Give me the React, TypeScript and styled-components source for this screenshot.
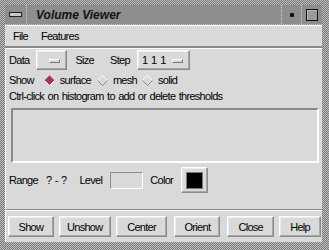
import React from "react";
import styled, { createGlobalStyle } from "styled-components";

const Global = createGlobalStyle`
  html, body { margin: 0; padding: 0; background: #d9d9d9; }
  body {
    font-family: "Liberation Sans", Arial, sans-serif;
    font-size: 11px;
    letter-spacing: -0.7px;
    word-spacing: 1px;
    color: #000;
  }
`;

const Frame = styled.div`
  width: 329px;
  height: 250px;
  box-sizing: border-box;
  padding: 5px 7px 8px 5px;
  background: repeating-conic-gradient(#7a7a7a 0 25%, #bdbdbd 0 50%) 0 0 / 2px 2px;
  display: flex;
  flex-direction: column;
`;

const TitleBar = styled.div`
  height: 19px;
  display: flex;
  align-items: stretch;
  background: #8e8e8e;
  border-bottom: 1px dotted #c8c8c8;
`;

const TitleSlot = styled.div<{ $w: number; $left?: boolean }>`
  width: ${(p) => p.$w}px;
  display: flex;
  align-items: center;
  justify-content: center;
  ${(p) => (p.$left ? "border-right: 1px dotted #cfcfcf;" : "border-left: 1px dotted #cfcfcf;")}
`;

const MenuGlyph = styled.div`
  width: 11px;
  height: 3px;
  background: #c8c8c8;
  border: 1px solid #222;
`;

const Dot = styled.div`
  width: 4px;
  height: 4px;
  background: #111;
  border-radius: 1px;
`;

const MaxBox = styled.div`
  width: 10px;
  height: 10px;
  border: 1px solid #111;
  background: #9a9a9a;
  box-shadow: inset 1px 1px 0 #bbb;
`;

const Title = styled.div`
  flex: 1;
  padding-left: 9px;
  display: flex;
  align-items: center;
  font-family: "Liberation Sans", Arial, sans-serif;
  font-weight: bold;
  font-style: italic;
  font-size: 12px;
  letter-spacing: 0;
  word-spacing: 0;
  color: #111;
`;

const MenuBar = styled.div`
  height: 23px;
  box-sizing: border-box;
  background: #d9d9d9;
  border-top: 1px solid #ffffff;
  border-bottom: 2px solid #8a8a8a;
  display: flex;
  align-items: center;
  padding-left: 8px;
  gap: 13px;
`;

const Content = styled.div`
  flex: 1;
  background: #d9d9d9;
  border-top: 1px solid #fff;
  border-left: 1px solid #fff;
  border-bottom: 1px solid #8a8a8a;
  padding: 1px 2px 0 2px;
  display: flex;
  flex-direction: column;
`;

const Row = styled.div<{ $h: number; $mt?: number }>`
  height: ${(p) => p.$h}px;
  margin-top: ${(p) => p.$mt ?? 0}px;
  display: flex;
  align-items: center;
  white-space: nowrap;
`;

const Label = styled.span<{ $ml?: number }>`
  margin-left: ${(p) => p.$ml ?? 0}px;
`;

const Raised = styled.div`
  border-top: 1px solid #ffffff;
  border-left: 1px solid #ffffff;
  border-right: 1px solid #8a8a8a;
  border-bottom: 1px solid #8a8a8a;
  box-shadow: inset -1px -1px 0 #a8a8a8, inset 1px 1px 0 #ececec;
`;

const OptionMenu = styled(Raised)<{ $w: number; $ml: number }>`
  width: ${(p) => p.$w}px;
  height: 20px;
  box-sizing: border-box;
  margin-left: ${(p) => p.$ml}px;
  display: flex;
  align-items: center;
  justify-content: space-between;
  padding: 0 6px 0 4px;
`;

const MenuValue = styled.span`
  letter-spacing: 0;
  word-spacing: 0;
`;

const Indicator = styled.div`
  width: 9px;
  height: 2px;
  border-top: 1px solid #fff;
  border-left: 1px solid #fff;
  border-right: 1px solid #777;
  border-bottom: 1px solid #777;
  background: #d9d9d9;
  margin-top: 2px;
`;

const RadioWrap = styled.span<{ $ml: number }>`
  display: inline-flex;
  align-items: center;
  margin-left: ${(p) => p.$ml}px;
  gap: 5px;
`;

const Histogram = styled.div`
  height: 55px;
  box-sizing: border-box;
  margin: 4px 1px 0 3px;
  border-top: 2px solid #8a8a8a;
  border-left: 2px solid #8a8a8a;
  border-right: 2px solid #ffffff;
  border-bottom: 2px solid #ffffff;
`;

const Entry = styled.div<{ $ml: number }>`
  width: 33px;
  height: 17px;
  box-sizing: border-box;
  margin-left: ${(p) => p.$ml}px;
  border-top: 1px solid #8a8a8a;
  border-left: 1px solid #8a8a8a;
  border-right: 1px solid #ffffff;
  border-bottom: 1px solid #ffffff;
`;

const Swatch = styled(Raised)<{ $ml: number }>`
  width: 27px;
  height: 26px;
  box-sizing: border-box;
  margin-left: ${(p) => p.$ml}px;
  display: flex;
  align-items: center;
  justify-content: center;
`;

const SwatchInner = styled.div`
  width: 15px;
  height: 15px;
  background: #000;
  border: 1px solid #777;
`;

const ButtonBar = styled.div`
  height: 32px;
  box-sizing: border-box;
  background: #d9d9d9;
  border-top: 1px solid #fff;
  border-left: 1px solid #fff;
  display: flex;
  align-items: center;
  padding: 0 1px 0 2px;
  gap: 5px;
`;

const Button = styled(Raised)<{ $w: number; $ml?: number }>`
  width: ${(p) => p.$w}px;
  height: 21px;
  box-sizing: border-box;
  margin-left: ${(p) => p.$ml ?? 0}px;
  display: flex;
  align-items: center;
  justify-content: center;
  font-size: 11px;
`;

function Diamond({ on }: { on?: boolean }) {
  return (
    <svg width="11" height="11" viewBox="0 0 11 11">
      <polygon points="5.5,0.5 10.5,5.5 5.5,10.5 0.5,5.5" fill={on ? "#b03060" : "#d9d9d9"} />
      <polyline points="0.5,5.5 5.5,0.5 10.5,5.5" fill="none" stroke={on ? "#8a8a8a" : "#ffffff"} strokeWidth="1" />
      <polyline points="0.5,5.5 5.5,10.5 10.5,5.5" fill="none" stroke={on ? "#ffffff" : "#8a8a8a"} strokeWidth="1" />
    </svg>
  );
}

export default function App() {
  return (
    <>
      <Global />
      <Frame>
        <TitleBar>
          <TitleSlot $w={21} $left>
            <MenuGlyph />
          </TitleSlot>
          <Title>Volume Viewer</Title>
          <TitleSlot $w={19}>
            <Dot />
          </TitleSlot>
          <TitleSlot $w={20}>
            <MaxBox />
          </TitleSlot>
        </TitleBar>
        <MenuBar>
          <span>File</span>
          <span>Features</span>
        </MenuBar>
        <Content>
          <Row $h={20} $mt={0}>
            <Label $ml={1}>Data</Label>
            <OptionMenu $w={31} $ml={7}>
              <span />
              <Indicator />
            </OptionMenu>
            <Label $ml={8}>Size</Label>
            <Label $ml={16}>Step</Label>
            <OptionMenu $w={53} $ml={7}>
              <MenuValue>1 1 1</MenuValue>
              <Indicator />
            </OptionMenu>
          </Row>
          <Row $h={16} $mt={2}>
            <Label $ml={1}>Show</Label>
            <RadioWrap $ml={10}>
              <Diamond on />
              surface
            </RadioWrap>
            <RadioWrap $ml={6}>
              <Diamond />
              mesh
            </RadioWrap>
            <RadioWrap $ml={5}>
              <Diamond />
              solid
            </RadioWrap>
          </Row>
          <Row $h={16}>
            <Label $ml={1}>Ctrl-click on histogram to add or delete thresholds</Label>
          </Row>
          <Histogram />
          <Row $h={26} $mt={4}>
            <Label $ml={1}>Range</Label>
            <Label $ml={8}>? - ?</Label>
            <Label $ml={13}>Level</Label>
            <Entry $ml={8} />
            <Label $ml={7}>Color</Label>
            <Swatch $ml={8}>
              <SwatchInner />
            </Swatch>
          </Row>
        </Content>
        <ButtonBar>
          <Button $w={46}>Show</Button>
          <Button $w={52}>Unshow</Button>
          <Button $w={52}>Center</Button>
          <Button $w={46} $ml={2}>Orient</Button>
          <Button $w={47} $ml={2}>Close</Button>
          <Button $w={42}>Help</Button>
        </ButtonBar>
      </Frame>
    </>
  );
}
